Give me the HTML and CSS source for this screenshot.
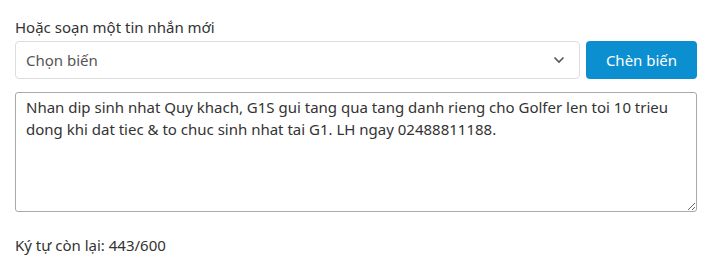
FILE: index.html
```html
<!DOCTYPE html>
<html lang="vi">
<head>
<meta charset="utf-8">
<link rel="stylesheet" href="styles.css">
</head>
<body>
<div class="form">
  <label class="label">Hoặc soạn một tin nhắn mới</label>
  <div class="row">
    <div class="select">
      <span class="select-text">Chọn biến</span>
      <svg class="chev" width="12" height="8" viewBox="0 0 12 8"><path d="M1.5 1.5 L6 6 L10.5 1.5" fill="none" stroke="#555" stroke-width="1.6"/></svg>
    </div>
    <button class="btn">Chèn biến</button>
  </div>
  <textarea class="msg">Nhan dip sinh nhat Quy khach, G1S gui tang qua tang danh rieng cho Golfer len toi 10 trieu dong khi dat tiec &amp; to chuc sinh nhat tai G1. LH ngay 02488811188.</textarea>
  <div class="count">Ký tự còn lại: 443/600</div>
</div>
</body>
</html>
```
FILE: styles.css
```css
html, body { margin: 0; padding: 0; background: #fff; }
body { font-family: "Noto Sans", "Open Sans", sans-serif; color: #333; font-size: 15px; }
.form { padding: 16px 16px 0 15px; display: flex; flex-direction: column; }
.label { display: block; line-height: 22px; margin-bottom: 3px; }
.row { display: flex; gap: 6px; height: 38px; }
.select { flex: 1; border: 1px solid #ddd; border-radius: 4px; display: flex; align-items: center; justify-content: space-between; padding: 0 14px 0 10px; color: #555; }
.btn { width: 111px; background: #0b8fd0; color: #fff; border: none; border-radius: 4px; font: inherit; font-size: 15px; }
.msg { margin-top: 13px; height: 120px; box-sizing: border-box; border: 1px solid #aaa; border-radius: 3px; padding: 3px 10px; font: inherit; color: #333; line-height: 22px; resize: vertical; }
.count { margin-top: 22px; line-height: 22px; }
```
